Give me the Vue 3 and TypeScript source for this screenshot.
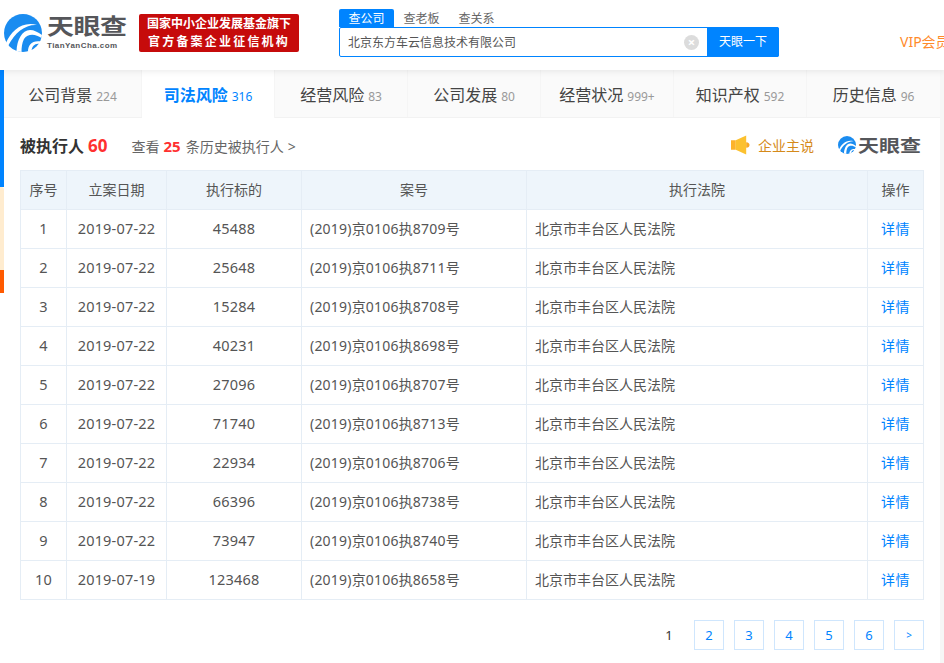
<script setup lang="ts">
const tabs = [
  { name: '公司背景', num: '224' },
  { name: '司法风险', num: '316', active: true },
  { name: '经营风险', num: '83' },
  { name: '公司发展', num: '80' },
  { name: '经营状况', num: '999+' },
  { name: '知识产权', num: '592' },
  { name: '历史信息', num: '96' },
]
const rows = [
  ['1', '2019-07-22', '45488', '(2019)京0106执8709号'],
  ['2', '2019-07-22', '25648', '(2019)京0106执8711号'],
  ['3', '2019-07-22', '15284', '(2019)京0106执8708号'],
  ['4', '2019-07-22', '40231', '(2019)京0106执8698号'],
  ['5', '2019-07-22', '27096', '(2019)京0106执8707号'],
  ['6', '2019-07-22', '71740', '(2019)京0106执8713号'],
  ['7', '2019-07-22', '22934', '(2019)京0106执8706号'],
  ['8', '2019-07-22', '66396', '(2019)京0106执8738号'],
  ['9', '2019-07-22', '73947', '(2019)京0106执8740号'],
  ['10', '2019-07-19', '123468', '(2019)京0106执8658号'],
]
const pages = ['2', '3', '4', '5', '6']
</script>

<template>
  <div class="page">
    <header class="head">
      <div class="logo">
        <svg class="mark" viewBox="0 0 38 38">
          <circle cx="19" cy="19" r="19" fill="#1a8cf0" />
          <path d="M2 29C7 17 18 7 33 11 22 10 11 18 4 32z" fill="#fff" />
          <path d="M12.500 37C13 26 18 16 26 16 30 16 34 18 38 21L37.500 24C32 20 24 19 20 25 18 29 17.500 33 17.500 38z" fill="#fff" />
          <path d="M24 37.500C24 31 28 26 37 27.500L36 30C31 29 28 32 27.500 37z" fill="#fff" />
        </svg>
        <div class="logotext">
          <div class="logocn">天眼查</div>
          <div class="logoen">TianYanCha.com</div>
        </div>
      </div>
      <div class="badge">
        <div>国家中小企业发展基金旗下</div>
        <div class="spaced">官方备案企业征信机构</div>
      </div>
      <div class="search">
        <div class="stabs">
          <span class="stab on">查公司</span>
          <span class="stab">查老板</span>
          <span class="stab">查关系</span>
        </div>
        <div class="sbox">
          <div class="sinput">
            <span>北京东方车云信息技术有限公司</span>
            <span class="clear">×</span>
          </div>
          <div class="sbtn">天眼一下</div>
        </div>
      </div>
      <div class="vip">VIP会员</div>
    </header>

    <div class="body">
      <aside class="side">
        <div class="side-blue"></div>
        <div class="side-cream"></div>
        <div class="side-orange"></div>
      </aside>

      <main class="main">
        <nav class="tabs">
          <div v-for="t in tabs" :key="t.name" class="tab" :class="{ active: t.active }">
            <span class="tname">{{ t.name }}</span>
            <span class="tnum">{{ t.num }}</span>
          </div>
        </nav>

        <section class="content">
          <div class="title">
            <div class="tleft">
              <span class="h">被执行人</span>
              <span class="red h2">60</span>
              <span class="hist">查看<b class="red num25">25</b>条历史被执行人<i class="gt">&gt;</i></span>
            </div>
            <div class="tright">
              <svg class="horn" viewBox="0 0 20 20">
                <rect x="0" y="5" width="5" height="10" fill="#fdb32a" />
                <path d="M5 5l11-5v20L5 15z" fill="#fcc12f" />
                <path d="M16 7c2.500 0 3.500 1.500 3.500 3s-1 3-3.500 3z" fill="#f9a825" />
              </svg>
              <span class="says">企业主说</span>
              <svg class="mini" viewBox="0 0 38 38">
                <circle cx="19" cy="19" r="19" fill="#1a8cf0" />
                <path d="M2 29C7 17 18 7 33 11 22 10 11 18 4 32z" fill="#fff" />
                <path d="M12.500 37C13 26 18 16 26 16 30 16 34 18 38 21L37.500 24C32 20 24 19 20 25 18 29 17.500 33 17.500 38z" fill="#fff" />
                <path d="M24 37.500C24 31 28 26 37 27.500L36 30C31 29 28 32 27.500 37z" fill="#fff" />
              </svg>
              <span class="minitext">天眼查</span>
            </div>
          </div>

          <table class="tbl">
            <colgroup>
              <col class="c1" />
              <col class="c2" />
              <col class="c3" />
              <col class="c4" />
              <col class="c5" />
              <col class="c6" />
            </colgroup>
            <thead>
              <tr>
                <th>序号</th>
                <th>立案日期</th>
                <th>执行标的</th>
                <th>案号</th>
                <th>执行法院</th>
                <th>操作</th>
              </tr>
            </thead>
            <tbody>
              <tr v-for="r in rows" :key="r[0]">
                <td>{{ r[0] }}</td>
                <td>{{ r[1] }}</td>
                <td>{{ r[2] }}</td>
                <td class="l code">{{ r[3] }}</td>
                <td class="l">北京市丰台区人民法院</td>
                <td class="link">详情</td>
              </tr>
            </tbody>
          </table>

          <div class="pager">
            <span class="cur">1</span>
            <span v-for="p in pages" :key="p" class="pg">{{ p }}</span>
            <span class="pg next">&gt;</span>
          </div>
        </section>
      </main>
      <div class="rail"></div>
    </div>
  </div>
</template>

<style>
html, body { margin: 0; overflow: hidden; background: #fff; }
</style>

<style scoped>
.page {
  width: 944px;
  height: 663px;
  overflow: hidden;
  font-family: "Noto Sans", "Noto Sans CJK SC", sans-serif;
  color: #333;
  background: #fff;
}
.head {
  height: 70px;
  display: flex;
  box-shadow: 0 2px 6px rgba(0, 0, 0, .07);
  position: relative;
  z-index: 2;
  background: #fff;
  white-space: nowrap;
}
.logo { display: flex; flex: none; margin: 14px 0 0 4px; width: 135px; }
.mark { width: 38px; height: 38px; flex: none; }
.logotext { margin-left: 5px; }
.logocn { font-family: "Liberation Sans", "Noto Sans CJK SC", sans-serif; font-size: 27px; line-height: 26px; font-weight: 700; color: #55565a; letter-spacing: -.5px; transform: scaleY(.82); }
.logoen { font-size: 8px; line-height: 10px; margin-top: 1px; font-weight: 700; color: #55565a; letter-spacing: .45px; font-family: "Liberation Sans", sans-serif; }
.badge {
  flex: none;
  margin-top: 14px;
  width: 160px;
  height: 38px;
  box-sizing: border-box;
  padding-top: 1px;
  background: #c60b0b;
  color: #fff;
  border-radius: 2px;
  font-size: 12px;
  line-height: 18px;
  font-weight: 700;
  text-align: center;
}
.spaced { letter-spacing: 2.2px; }
.search { flex: none; margin: 9px 0 0 40px; width: 440px; }
.stabs { display: flex; height: 18px; align-items: stretch; }
.stab { font-size: 12px; line-height: 19px; color: #666; width: 55px; text-align: center; flex: none; }
.stab.on { background: #0084ff; color: #fff; border-radius: 2px 2px 0 0; }
.sbox { display: flex; height: 30px; box-sizing: border-box; border: 1px solid #0084ff; border-radius: 2px; width: 440px; }
.sinput { flex: 1; display: flex; justify-content: space-between; align-items: center; padding: 0 9px 0 8px; font-size: 12px; color: #555; }
.clear { width: 15px; height: 15px; line-height: 14px; border-radius: 50%; background: #dcdcdc; color: #fff; text-align: center; font-size: 13px; font-weight: 700; }
.sbtn { width: 72px; margin: -1px; flex: none; background: #0084ff; color: #fff; font-size: 12px; line-height: 30px; text-align: center; border-radius: 0 2px 2px 0; }
.vip { flex: none; margin: 31px 0 0 121px; font-size: 14px; color: #ff8a2b; }

.body { display: flex; height: 593px; }
.side { width: 4px; flex: none; display: flex; flex-direction: column; }
.side-blue { height: 117px; background: #0084ff; }
.side-cream { height: 83px; background: #ffeccf; border-top-right-radius: 3px; }
.side-orange { height: 23px; background: #ff5a00; }
.main { width: 936px; flex: none; }
.rail { width: 4px; flex: none; background: #f6f6f6; }
.tabs {
  display: flex;
  height: 48px;
  background: #fafafa;
  border-bottom: 1px solid #f2f2f2;
  box-sizing: border-box;
}
.tab {
  flex: none;
  width: 133px;
  text-align: center;
  line-height: 50px;
  border-right: 1px solid #f5f5f5;
  box-sizing: border-box;
}
.tab:first-child { width: 138px; }
.tab:last-child { border-right: 0; }
.tab.active { background: #fff; height: 48px; }
.tname { font-size: 16px; color: #444; }
.tnum { font-size: 12px; color: #999; margin-left: 4px; }
.active .tname, .active .tnum { color: #0084ff; }
.active .tname { font-weight: 700; }
.content { padding: 0 16px; width: 904px; }
.title { height: 52px; box-sizing: border-box; padding-top: 2px; display: flex; justify-content: space-between; align-items: center; }
.tleft { display: flex; align-items: baseline; }
.h { font-size: 16px; font-weight: 700; color: #333; }
.h2 { font-size: 17px; font-weight: 700; margin-left: 4px; }
.red { color: #ff3030; }
.hist { font-size: 14px; color: #666; margin-left: 24px; }
.num25 { font-size: 15px; margin: 0 5px 0 4px; }
.gt { font-style: normal; margin-left: 4px; }
.tright { display: flex; align-items: center; margin-right: 3px; }
.horn { width: 19px; height: 20px; }
.says { font-size: 14px; color: #d58a1a; margin: 0 24px 0 8px; }
.mini { width: 18px; height: 18px; }
.minitext { font-size: 21px; font-weight: 700; color: #55565a; margin-left: 2px; line-height: 22px; transform: scaleY(.82); }
.c1 { width: 46px; }
.c2 { width: 100px; }
.c3 { width: 135px; }
.c4 { width: 225px; }
.c5 { width: 341px; }
.c6 { width: 56px; }
.tbl {
  width: 904px;
  border-collapse: collapse;
  table-layout: fixed;
  font-size: 14.5px;
  letter-spacing: .2px;
}
.tbl th, .tbl td {
  border: 1px solid #e5edf5;
  height: 36px;
  padding: 0 0 2px;
  text-align: center;
  font-weight: 400;
  color: #555;
  box-sizing: content-box;
}
.tbl th { background: #eef5fb; font-size: 14px; letter-spacing: 0; }
.tbl td.l { text-align: left; padding-left: 8px; font-size: 14px; letter-spacing: 0; }
.tbl td.code { letter-spacing: .2px; }
.tbl td.link { color: #0084ff; font-size: 14px; letter-spacing: .5px; }
.pager { display: flex; justify-content: flex-end; gap: 10px; margin-top: 20px; }
.cur { width: 30px; height: 30px; line-height: 30px; text-align: center; font-size: 13px; color: #333; }
.pg {
  width: 30px;
  height: 30px;
  box-sizing: border-box;
  border: 1px solid #cfe6fd;
  line-height: 28px;
  text-align: center;
  font-size: 13px;
  color: #0084ff;
}
.next { font-size: 10px; }
</style>
